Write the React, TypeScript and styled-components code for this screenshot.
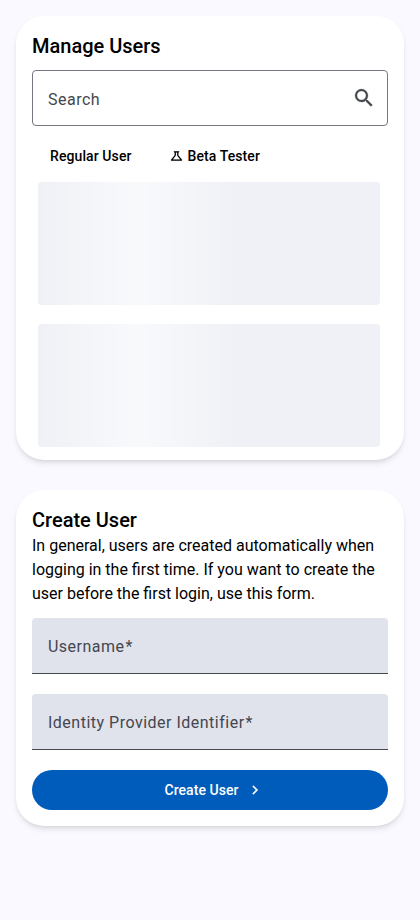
import React from 'react';
import styled, { createGlobalStyle } from 'styled-components';

const GlobalStyle = createGlobalStyle`
  *, *::before, *::after { box-sizing: border-box; }
  html { background: #faf9ff; }
  body {
    margin: 0;
    color: #000;
    font: 400 16px/24px Roboto, sans-serif;
  }
`;

const Page = styled.main`
  display: flex;
  flex-direction: column;
  gap: 30px;
  min-height: 100vh;
  padding: 16px;
  background: #faf9ff;
`;

const Card = styled.section`
  display: flex;
  flex-direction: column;
  padding: 16px;
  border-radius: 28px;
  background: #fff;
  box-shadow: 0 4px 6px -1px rgba(0, 0, 0, 0.1), 0 2px 4px -2px rgba(0, 0, 0, 0.1);
`;

const UserListCard = styled(Card)`
  height: 444px;
`;

const CreateCard = styled(Card)`
  height: 336px;
`;

const Title = styled.h2`
  margin: 0;
  font-size: 20px;
  font-weight: 500;
  line-height: 28px;
`;

const Field = styled.label<{ $outlined?: boolean }>`
  display: flex;
  align-items: center;
  height: 56px;
  flex: none;
  padding: ${(p) => (p.$outlined ? '0 11px 0 15px' : '0 16px')};
  border: ${(p) => (p.$outlined ? '1px solid #74777f' : '0 solid #44474e')};
  border-bottom-width: 1px;
  border-radius: ${(p) => (p.$outlined ? '4px' : '4px 4px 0 0')};
  background: ${(p) => (p.$outlined ? 'transparent' : '#e0e2ec')};
  color: #44474e;
  letter-spacing: 0.496px;
`;

const SearchField = styled(Field)`
  justify-content: space-between;
  margin-top: 10px;
`;

const FieldText = styled.span<{ $required?: boolean }>`
  padding-top: ${(p) => (p.$required ? '2px' : '3px')};

  &::after {
    content: ${(p) => (p.$required ? "'*'" : 'none')};
    margin-left: 1px;
  }
`;

const SearchIcon = styled.svg`
  width: 24px;
  height: 24px;
  fill: currentColor;
  stroke: currentColor;
  stroke-width: 0.25px;
`;

const Legend = styled.div`
  display: flex;
  gap: 37.5px;
  margin-top: 20px;
  padding-left: 18px;
  font-size: 14px;
  font-weight: 500;
  line-height: 20px;
  letter-spacing: 0.096px;
`;

const LegendItem = styled.span`
  display: inline-flex;
  align-items: center;
  gap: 3.5px;
`;

const FlaskIcon = styled.svg`
  width: 15px;
  height: 14px;
  fill: currentColor;
  stroke: currentColor;
  stroke-width: 0.2px;
`;

const SkeletonList = styled.div`
  display: flex;
  flex-direction: column;
  gap: 19px;
  padding: 16px 8px 0 6px;
`;

const Skeleton = styled.div`
  height: 123px;
  border-radius: 4px;
  background: #eff1f6 linear-gradient(90deg, rgba(255, 255, 255, 0), rgba(255, 255, 255, 0.6), rgba(255, 255, 255, 0))
    no-repeat 0 0 / 200px 100%;
`;

const Description = styled.p`
  margin: 0;
`;

const Form = styled.div`
  display: flex;
  flex-direction: column;
  gap: 20px;
  margin-top: 12px;
`;

const SubmitButton = styled.button`
  display: flex;
  align-items: center;
  justify-content: center;
  gap: 7px;
  height: 40px;
  padding: 0 16px 0 24px;
  border: 0;
  border-radius: 20px;
  background: #005cbb;
  color: #fff;
  font: 500 14px/20px Roboto, sans-serif;
  letter-spacing: 0.05px;
`;

const ChevronIcon = styled.svg`
  width: 18px;
  height: 18px;
  fill: currentColor;
  stroke: currentColor;
  stroke-width: 0.3px;
`;

export default function App() {
  return (
    <>
      <GlobalStyle />
      <Page>
        <UserListCard>
          <Title>Manage Users</Title>
          <SearchField $outlined>
            <FieldText>Search</FieldText>
            <SearchIcon viewBox="0 0 24 24">
              <path d="M15.5 14h-.79l-.28-.27A6.471 6.471 0 0 0 16 9.5 6.5 6.5 0 1 0 9.5 16c1.61 0 3.09-.59 4.23-1.57l.27.28v.79l5 4.99L20.49 19l-4.99-5zm-6 0C7.01 14 5 11.99 5 9.5S7.01 5 9.5 5 14 7.01 14 9.5 11.99 14 9.5 14z" />
            </SearchIcon>
          </SearchField>
          <Legend>
            <LegendItem>Regular User</LegendItem>
            <LegendItem>
              <FlaskIcon viewBox="0 0 24 24" preserveAspectRatio="none">
                <path d="M13 11.33 18 18H6l5-6.67V6h2M15.96 4H8.04c-.42 0-.65.48-.39.81L9 6.5v4.17L3.2 18.4c-.49.66-.02 1.6.8 1.6h16c.82 0 1.29-.94.8-1.6L15 10.67V6.5l1.35-1.69c.26-.33.03-.81-.39-.81z" />
              </FlaskIcon>
              Beta Tester
            </LegendItem>
          </Legend>
          <SkeletonList>
            <Skeleton />
            <Skeleton />
          </SkeletonList>
        </UserListCard>
        <CreateCard>
          <Title>Create User</Title>
          <Description>
            In general, users are created automatically when logging in the first time. If you want to create the user
            before the first login, use this form.
          </Description>
          <Form>
            <Field>
              <FieldText $required>Username</FieldText>
            </Field>
            <Field>
              <FieldText $required>Identity Provider Identifier</FieldText>
            </Field>
            <SubmitButton type="button">
              Create User
              <ChevronIcon viewBox="0 0 24 24">
                <path d="M10 6 8.59 7.41 13.17 12l-4.58 4.59L10 18l6-6z" />
              </ChevronIcon>
            </SubmitButton>
          </Form>
        </CreateCard>
      </Page>
    </>
  );
}
